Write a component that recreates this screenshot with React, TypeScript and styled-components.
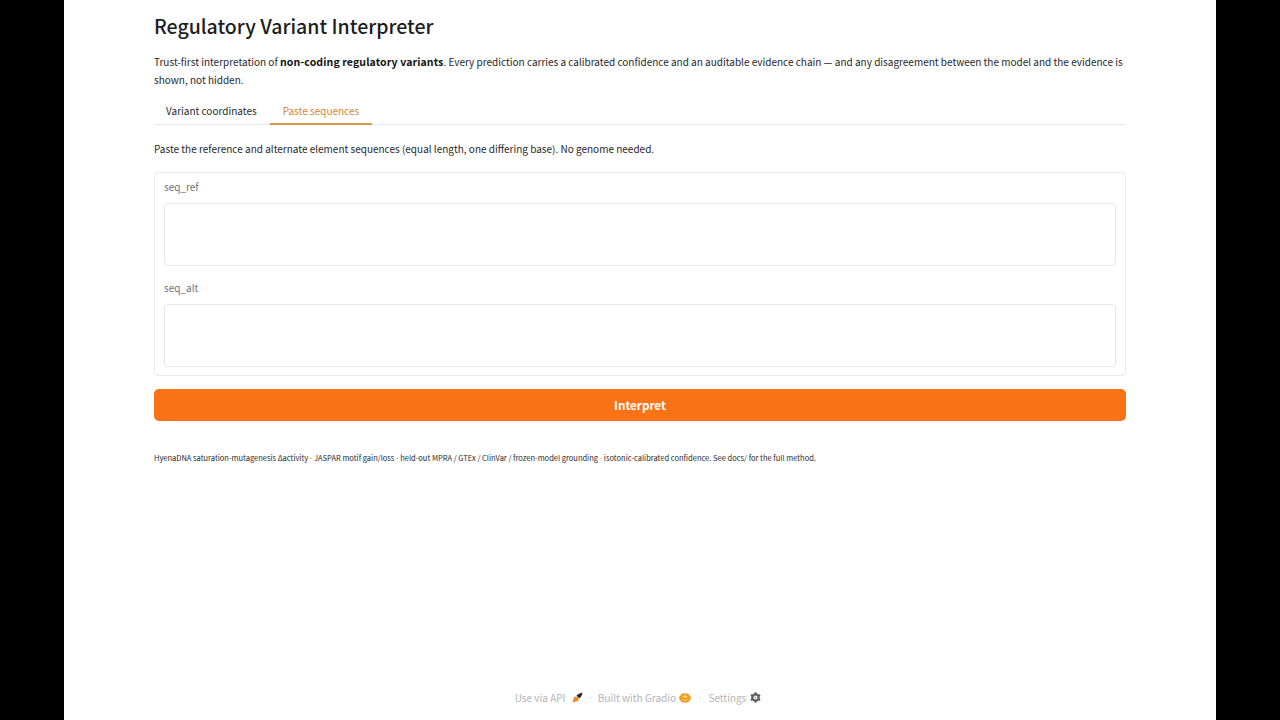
import React from 'react';
import styled, { createGlobalStyle } from 'styled-components';

const fontStack = '"Noto Sans CJK SC", "Noto Sans", sans-serif';

const GlobalStyle = createGlobalStyle`
  html, body {
    margin: 0;
    padding: 0;
    height: 100%;
    background: #000000;
    font-family: ${fontStack};
  }
  * { box-sizing: border-box; }
`;

const Page = styled.div`
  width: 1152px;
  height: 720px;
  margin: 0 auto;
  padding: 0 90px;
  display: flex;
  flex-direction: column;
  background: #ffffff;
  color: #27272a;
`;

const Main = styled.main`
  flex: 1;
  padding-top: 12px;
`;

const Title = styled.h1`
  margin: 0;
  height: 30px;
  font-size: 19.5px;
  line-height: 28px;
  font-weight: 500;
  color: #1c1c21;
`;

const Intro = styled.p`
  margin: 10.6px 0 0;
  font-size: 10px;
  line-height: 18.6px;
  color: #27272a;

  strong {
    font-size: 10.5px;
    letter-spacing: 0.12px;
    font-weight: 700;
    color: #111111;
  }
`;

const TabBar = styled.div`
  display: flex;
  height: 25px;
  margin-top: 10.2px;
  border-bottom: 1px solid #e5e7eb;
`;

const Tab = styled.div<{ $active?: boolean }>`
  height: 25px;
  padding: 0 13px;
  font-size: 10px;
  line-height: 22px;
  color: ${(p) => (p.$active ? '#d9843b' : '#27272a')};
  border-bottom: 2px solid ${(p) => (p.$active ? '#d9964f' : 'transparent')};

  &:first-child {
    padding-left: 12px;
  }
`;

const Hint = styled.p`
  margin: 14px 0 0;
  font-size: 10px;
  line-height: 19px;
`;

const Card = styled.div`
  margin-top: 14px;
  height: 204px;
  padding: 6px 9px;
  border: 1px solid #e9eaec;
  border-radius: 4px;
`;

const FieldLabel = styled.label`
  display: block;
  height: 24px;
  font-size: 10px;
  line-height: 16px;
  color: #71717a;
`;

const SeqInput = styled.textarea`
  display: block;
  width: 100%;
  height: 63px;
  margin: 0 0 14px;
  border: 1px solid #e5e7eb;
  border-radius: 4px;
  background: #ffffff;
  outline: none;
  resize: none;
`;

const InterpretButton = styled.button`
  display: block;
  width: 100%;
  height: 32px;
  margin-top: 13px;
  padding: 0 0 1px;
  border: none;
  border-radius: 5px;
  background: #f97316;
  color: #ffffff;
  font-family: ${fontStack};
  font-size: 11.67px;
  font-weight: 700;
`;

const Note = styled.p`
  margin: 29px 0 0;
  font-size: 7.5px;
  line-height: 16px;
  color: #27272a;
`;

const Sep = styled.span`
  font-family: "Liberation Sans", sans-serif;
`;

const Footer = styled.footer`
  height: 44px;
  display: flex;
  align-items: center;
  justify-content: center;
  padding: 0 4px 1px 0;
  font-size: 10px;
  color: #b3b4b8;
`;

const FooterLink = styled.span<{ $gap: number }>`
  display: flex;
  align-items: center;
  gap: ${(p) => p.$gap}px;
`;

const Dot = styled.span<{ $space: number }>`
  margin: 0 ${(p) => p.$space}px;
  font-family: "Liberation Sans", sans-serif;
  font-size: 10px;
`;

const RocketIcon = () => (
  <svg width="11" height="11" viewBox="0 0 11 11">
    <path d="M0.5 10.5 L1.8 5.6 Q3 4.2 4.6 4.4 L6.6 6.4 Q6.8 8 5.4 9.2 Z" fill="#f0882a" />
    <path d="M4.4 3.6 Q7 0.8 10.6 0.4 Q10.2 4 7.4 6.6 Z" fill="#2a2a30" />
  </svg>
);

const GradioIcon = () => (
  <svg width="12" height="10" viewBox="0 0 12 10">
    <path d="M3 0.5 H9 L11.8 4 V6 L9 9.5 H3 L0.2 6 V4 Z" fill="#f29a26" />
    <path d="M3 3.6 L6 2 L9 3.6 L6 5.2 Z" fill="#fbd26a" />
    <path d="M2.6 6 L6 7.8 L9.4 6" fill="none" stroke="#fbd26a" strokeWidth="1" />
  </svg>
);

const GearIcon = () => (
  <svg width="11" height="11" viewBox="0 0 12 12">
    <circle cx="6" cy="6" r="3.5" fill="none" stroke="#5c5d62" strokeWidth="2.4" />
    <circle cx="6" cy="6" r="1.2" fill="#a9aaae" />
    <path
      d="M6 .4v2.4M6 9.2v2.4M1 3.1l2 1.2M9 7.7l2 1.2M1 8.9l2-1.2M9 4.3l2-1.2"
      stroke="#5c5d62"
      strokeWidth="2"
    />
  </svg>
);

const App = () => (
  <Page>
    <GlobalStyle />
    <Main>
      <Title>Regulatory Variant Interpreter</Title>
      <Intro>
        Trust-first interpretation of <strong>non-coding regulatory variants</strong>. Every
        prediction carries a calibrated confidence and an auditable evidence chain — and any
        disagreement between the model and the evidence is shown, not hidden.
      </Intro>
      <TabBar>
        <Tab>Variant coordinates</Tab>
        <Tab $active>Paste sequences</Tab>
      </TabBar>
      <Hint>
        Paste the reference and alternate element sequences (equal length, one differing base). No
        genome needed.
      </Hint>
      <Card>
        <FieldLabel>seq_ref</FieldLabel>
        <SeqInput />
        <FieldLabel>seq_alt</FieldLabel>
        <SeqInput />
      </Card>
      <InterpretButton>Interpret</InterpretButton>
      <Note>
        HyenaDNA saturation-mutagenesis Δactivity <Sep>·</Sep> JASPAR motif gain/loss <Sep>·</Sep>{' '}
        held-out MPRA / GTEx / ClinVar / frozen-model grounding <Sep>·</Sep> isotonic-calibrated
        confidence. See docs/ for the full method.
      </Note>
    </Main>
    <Footer>
      <FooterLink $gap={6}>
        Use via API <RocketIcon />
      </FooterLink>
      <Dot $space={6}>·</Dot>
      <FooterLink $gap={3}>
        Built with Gradio <GradioIcon />
      </FooterLink>
      <Dot $space={7}>·</Dot>
      <FooterLink $gap={4}>
        Settings <GearIcon />
      </FooterLink>
    </Footer>
  </Page>
);

export default App;
